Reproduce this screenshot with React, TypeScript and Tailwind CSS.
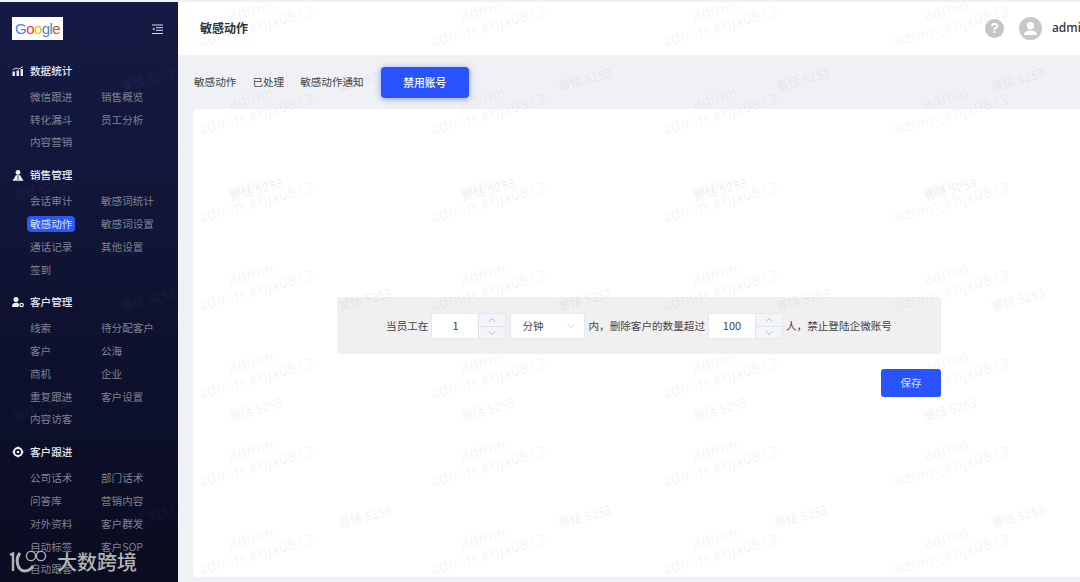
import React from "react";
import { ChevronUp, ChevronDown } from "lucide-react";

const KH_X = [256, 488, 720, 951];
const KH_Y = [26, 114, 202, 290, 378, 466, 554];
const NAME_ROWS: [number, number[]][] = [
  [80, [148, 365, 585, 803, 1018]],
  [190, [40, 256, 488, 720, 950]],
  [300, [148, 365, 585, 803, 1018]],
  [410, [40, 256, 488, 720, 950]],
  [517, [148, 365, 585, 801, 1018]],
];

function Watermarks() {
  return (
    <div className="absolute inset-0 overflow-hidden pointer-events-none z-10">
      {KH_Y.flatMap((y) =>
        KH_X.map((x) => (
          <React.Fragment key={`${x}-${y}`}>
            <span
              className="absolute -translate-x-1/2 -translate-y-1/2 rotate-[-15deg] whitespace-nowrap font-['Noto_Sans',sans-serif] text-[15px] leading-none tracking-[0.3px] text-[rgba(120,120,130,0.09)]"
              style={{ left: x - 5, top: y - 16 }}
            >
              admin
            </span>
            <span
              className="absolute -translate-x-1/2 -translate-y-1/2 rotate-[-15deg] whitespace-nowrap font-['Noto_Sans',sans-serif] text-[15px] leading-none tracking-[0.3px] text-[rgba(120,120,130,0.09)]"
              style={{ left: x, top: y }}
            >
              admin_khjx0813
            </span>
          </React.Fragment>
        ))
      )}
      {NAME_ROWS.flatMap(([y, xs]) =>
        xs.map((x) => (
          <span
            key={`${x}-${y}`}
            className="absolute -translate-x-1/2 -translate-y-1/2 rotate-[-15deg] whitespace-nowrap font-['Noto_Sans','Noto_Sans_CJK_SC',sans-serif] text-[12px] leading-none text-[rgba(120,120,130,0.12)]"
            style={{ left: x, top: y }}
          >
            蔷恬 5253
          </span>
        ))
      )}
    </div>
  );
}

const IconChart = () => (
  <svg width="12" height="10" viewBox="0 0 12 10" fill="#e6e7ee">
    <rect x="0.5" y="5.5" width="2.5" height="4.5" />
    <rect x="4.5" y="4.5" width="2.5" height="5.5" />
    <rect x="8.5" y="3" width="2.5" height="7" />
    <path d="M0.5 3.8 L4 2 L6.5 3.2 L11 0.6" fill="none" stroke="#e6e7ee" strokeWidth="0.9" />
  </svg>
);
const IconPeople = () => (
  <svg width="12" height="11" viewBox="0 0 12 11" fill="#f2f3f7">
    <circle cx="6" cy="2.4" r="2.4" />
    <path d="M3.8 5.2 H8.2 L9.6 8 L11.6 10.8 H0.4 L2.4 8 Z" />
    <path d="M6 6 V10" stroke="#151a45" strokeWidth="0.8" />
  </svg>
);
const IconCustomer = () => (
  <svg width="12" height="11" viewBox="0 0 12 11" fill="#f2f3f7">
    <circle cx="4" cy="2.6" r="2.5" />
    <path d="M0 10 C0 6.6 2 5.8 4 5.8 C5.4 5.8 6.4 6.2 7 7 L6.6 10 Z" />
    <circle cx="9.6" cy="8" r="1.7" fill="none" stroke="#f2f3f7" strokeWidth="1.2" />
  </svg>
);
const IconTarget = () => (
  <svg width="12" height="12" viewBox="0 0 12 12">
    <circle cx="6" cy="6" r="4" fill="none" stroke="#f2f3f7" strokeWidth="2" />
    <circle cx="6" cy="6" r="1.3" fill="#f2f3f7" />
    <path d="M6 0.4 V2 M6 10 V11.6 M0.4 6 H2 M10 6 H11.6" stroke="#f2f3f7" strokeWidth="1" />
  </svg>
);

type Section = { icon: React.ReactNode; title: string; items: string[] };
const SECTIONS: Section[] = [
  {
    icon: <IconChart />,
    title: "数据统计",
    items: ["微信跟进", "销售概览", "转化漏斗", "员工分析", "内容营销"],
  },
  {
    icon: <IconPeople />,
    title: "销售管理",
    items: ["会话审计", "敏感词统计", "敏感动作", "敏感词设置", "通话记录", "其他设置", "签到"],
  },
  {
    icon: <IconCustomer />,
    title: "客户管理",
    items: ["线索", "待分配客户", "客户", "公海", "商机", "企业", "重复跟进", "客户设置", "内容访客"],
  },
  {
    icon: <IconTarget />,
    title: "客户跟进",
    items: ["公司话术", "部门话术", "问答库", "营销内容", "对外资料", "客户群发", "自动标签", "客户SOP", "自动跟客"],
  },
];

function Sidebar() {
  return (
    <aside className="w-[178px] shrink-0 h-full overflow-hidden bg-gradient-to-b from-[#151a45] to-[#0a0c20] font-['Noto_Sans_CJK_SC',sans-serif]">
      <div className="h-[61px] pl-3 pr-[15px] pt-[15px] flex items-start justify-between">
        <div className="w-[51px] h-[23px] bg-white flex items-center justify-center font-['Liberation_Sans',sans-serif] text-[15px] leading-none tracking-[-0.6px]">
          <span className="text-[#4285f4]">G</span>
          <span className="text-[#ea4335]">o</span>
          <span className="text-[#fbbc05]">o</span>
          <span className="text-[#4285f4]">g</span>
          <span className="text-[#34a853]">l</span>
          <span className="text-[#ea4335]">e</span>
        </div>
        <svg className="mt-[7px]" width="11" height="11" viewBox="0 0 11 11" fill="none" stroke="#d8dae4" strokeWidth="1">
          <path d="M0 1 H11 M4 3.7 H11 M4 6.3 H11 M0 9.5 H11" />
          <path d="M2.5 3.4 L0.4 5 L2.5 6.6 Z" fill="#d8dae4" stroke="none" />
        </svg>
      </div>
      <div className="flex flex-col gap-[13.5px]">
        {SECTIONS.map((s) => (
          <section key={s.title}>
            <div className="h-4 pl-3 flex items-center text-[10.6px] font-medium text-[#e8e9ef] mb-[6.6px]">
              <span className="w-[18px] flex items-center">{s.icon}</span>
              {s.title}
            </div>
            <div className="pl-[30px] grid grid-cols-[71px_71px] auto-rows-[22.75px] items-center text-[10.6px] leading-4 text-[#7f8294]">
              {s.items.map((it) =>
                it === "敏感动作" ? (
                  <span key={it}>
                    <span className="inline-block -mx-[3px] px-[3px] rounded-[4px] bg-[#2b58f0] text-[#d8e0ff]">{it}</span>
                  </span>
                ) : (
                  <span key={it} className="whitespace-nowrap">{it}</span>
                )
              )}
            </div>
          </section>
        ))}
      </div>
    </aside>
  );
}

function Stepper() {
  return (
    <div className="w-[27px] h-full flex flex-col bg-[#f3f5fb] border-l border-[#e0e3ec] text-[#8e929e]">
      <div className="flex-1 flex items-center justify-center border-b border-[#e0e3ec]">
        <ChevronUp size={12} strokeWidth={1.2} />
      </div>
      <div className="flex-1 flex items-center justify-center">
        <ChevronDown size={12} strokeWidth={1.2} />
      </div>
    </div>
  );
}

function NumberBox({ value }: { value: string }) {
  return (
    <div className="w-[75px] h-[26px] flex bg-white rounded-[2px] border border-[#e6e8ef] overflow-hidden">
      <div className="flex-1 flex items-center justify-center text-[#444] text-[11px]">{value}</div>
      <Stepper />
    </div>
  );
}

function Body() {
  return (
    <div className="flex-1 min-h-0 bg-[#f0f1f4] pl-[15px] text-[10.6px]">
      <div className="h-[54px] flex items-center text-[#444]">
        <span className="ml-px mr-[16px]">敏感动作</span>
        <span className="mr-4">已处理</span>
        <span className="mr-[17px]">敏感动作通知</span>
        <button className="w-[88px] h-[31px] rounded-[4px] bg-[#2953fd] text-white text-[10.8px] font-medium shadow-[0_1px_6px_rgba(41,83,253,0.55)]">
          禁用账号
        </button>
      </div>
      <div className="w-[892px] h-[468px] bg-white rounded-[4px] pt-[188px]">
        <div className="w-[604px] mx-auto">
          <div className="h-[57px] bg-[#f0f0f0] rounded-[2px] flex items-center justify-center gap-[3px] text-[10.6px] text-[#444]">
            <span>当员工在</span>
            <NumberBox value="1" />
            <div className="w-[75px] h-[26px] ml-px flex items-center justify-between pl-[11px] pr-[7px] bg-white rounded-[2px] border border-[#e6e8ef]">
              <span>分钟</span>
              <ChevronDown size={12} strokeWidth={1} className="text-[#a9adb8]" />
            </div>
            <span className="whitespace-nowrap">内，删除客户的数量超过</span>
            <NumberBox value="100" />
            <span className="whitespace-nowrap">人，禁止登陆企微账号</span>
          </div>
          <div className="flex justify-end mt-[15px]">
            <button className="w-[60px] h-[28px] rounded-[3px] bg-[#2953fd] text-[#dfe5ff] text-[10.6px]">保存</button>
          </div>
        </div>
      </div>
    </div>
  );
}

function Header() {
  return (
    <header className="h-[53px] shrink-0 bg-white flex items-center pl-[22px] pb-[1px]">
      <h1 className="text-[12px] font-semibold text-[#333]">敏感动作</h1>
      <div className="ml-auto flex items-center">
        <span className="w-[19px] h-[19px] rounded-full bg-[#c4c4c4] text-white text-[14px] font-bold flex items-center justify-center font-['Liberation_Sans',sans-serif]">?</span>
        <span className="ml-[15px] w-[23px] h-[23px] rounded-full bg-[#c8c8c8] overflow-hidden flex items-center justify-center">
          <svg width="23" height="23" viewBox="0 0 23 23" fill="#fff">
            <circle cx="11.5" cy="8.8" r="3.7" />
            <path d="M5 18 C5 14.5 8 13.6 11.5 13.6 C15 13.6 18 14.5 18 18 Z" />
          </svg>
        </span>
        <span className="ml-[10px] w-[28px] overflow-hidden whitespace-nowrap font-['Noto_Sans',sans-serif] text-[12px] font-medium text-[#333]">admin</span>
      </div>
    </header>
  );
}

export default function App() {
  return (
    <div className="relative w-[1080px] h-[582px] overflow-hidden flex flex-col bg-[#f0f1f4] font-['Noto_Sans_CJK_SC',sans-serif]">
      <div className="h-[2px] shrink-0 bg-[#f0f1f4]" />
      <div className="flex-1 min-h-0 flex">
        <Sidebar />
        <main className="flex-1 min-w-0 flex flex-col">
          <Header />
          <Body />
        </main>
      </div>
      <Watermarks />
      <div className="absolute left-[9px] bottom-[8px] z-20 flex items-center gap-[9px] text-[#b4b4b4]">
        <svg width="39" height="25" viewBox="0 0 39 25" fill="none" stroke="#b4b4b4" strokeWidth="2.4">
          <path d="M1 6 L4 4.5 V22" />
          <path d="M11 4 C6 10 8 22 16 22 C20 22 22 20 24 17" strokeWidth="3" />
          <circle cx="22" cy="7" r="4.6" strokeWidth="1.4" />
          <circle cx="32" cy="7" r="4.6" strokeWidth="1.4" />
        </svg>
        <span className="text-[20px] leading-none font-medium whitespace-nowrap">大数跨境</span>
      </div>
    </div>
  );
}
